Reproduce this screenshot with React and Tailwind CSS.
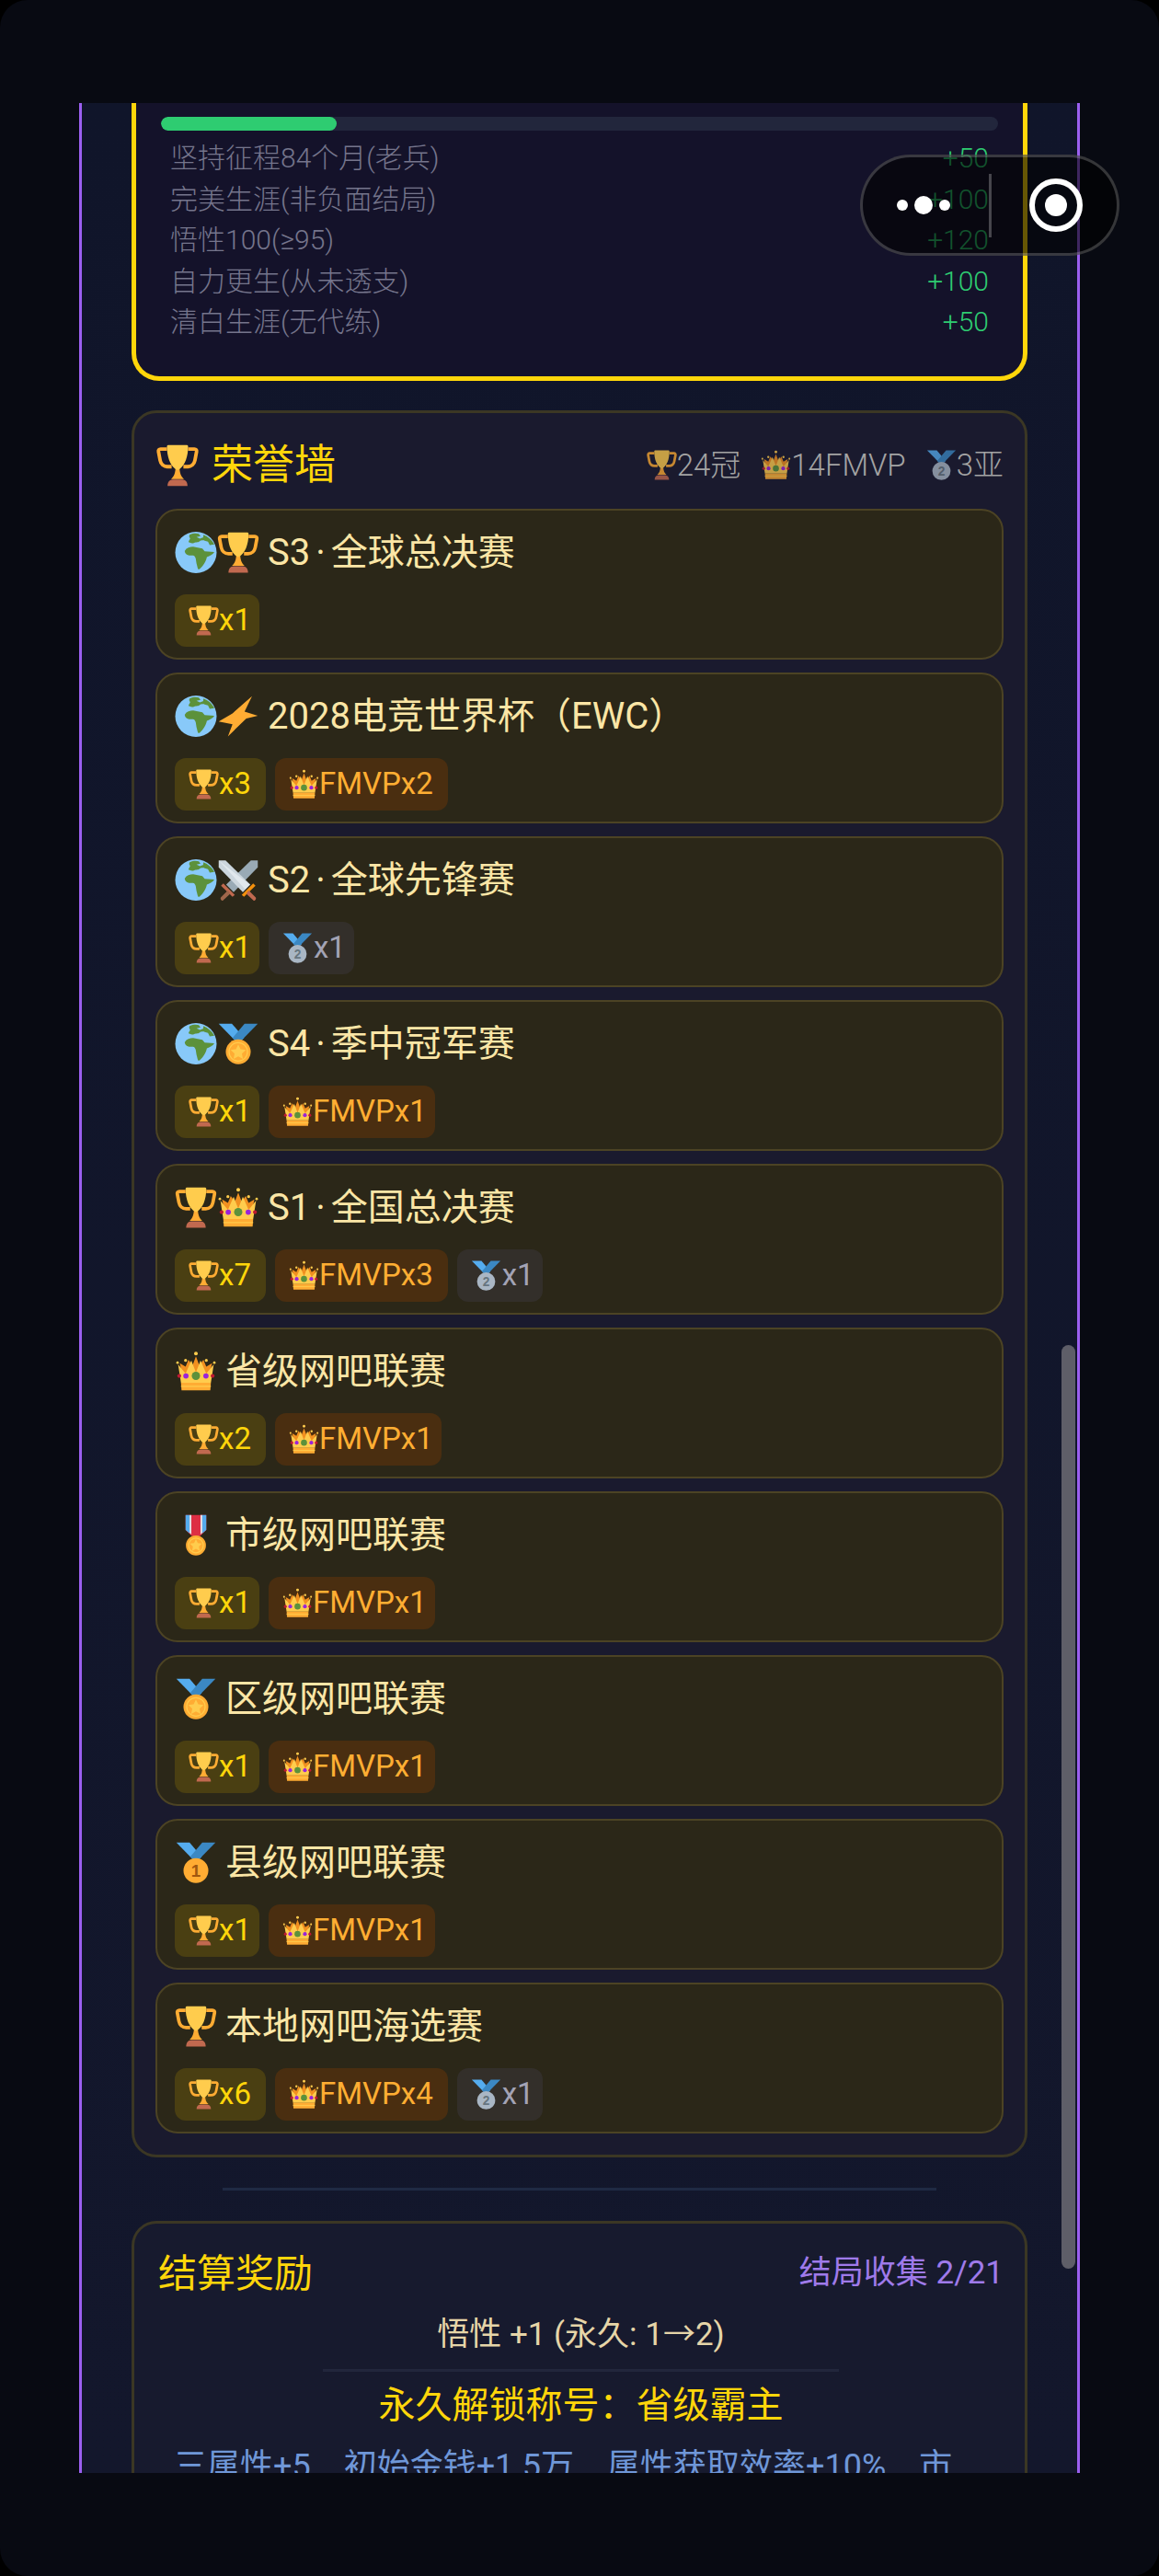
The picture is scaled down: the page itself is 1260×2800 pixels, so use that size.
import React from "react";

// emoji drawn by hand, 36x36 box
const Trophy = ({ className }) => (
  <svg viewBox="0 0 36 36" className={className}>
    <path d="M9 4H3.6C2.2 4 1.6 5 1.8 6.2l1.4 7.4C3.8 16.8 6.2 19 9.5 19H13" fill="none" stroke="#FFAC33" strokeWidth="3" />
    <path d="M27 4h5.4c1.4 0 2 1 1.8 2.2l-1.4 7.4C32.2 16.8 29.8 19 26.5 19H23" fill="none" stroke="#FFAC33" strokeWidth="3" />
    <path d="M16.3 19h3.4c0 5 1 8 3.8 10.500h-11c2.800-2.500 3.800-5.500 3.800-10.500z" fill="#FFAC33" />
    <path d="M9 1.800C9 .8 9.800.5 10.500.5h15c.7 0 1.500.3 1.500 1.300 0 9-3 17.700-9 20.200-6-2.500-9-11.200-9-20.200z" fill="#FFCC4D" />
    <path d="M9.500 35.500c0-3 1.500-5.500 4.500-5.500h8c3 0 4.500 2.500 4.500 5.500z" fill="#C1694F" />
  </svg>
);

const Globe = ({ className }) => (
  <svg viewBox="0 0 36 36" className={className}>
    <circle cx="18" cy="18" r="18" fill="#88C9F9" />
    <path d="M12.500 2.500c3-1.200 6-1.500 8-.7l1.500 2-3.500.7 3 1.500 3.500-1.500 3 1c-1 1.500-4.500 2-6 2-1.500 2-4 1.300-5.500 2-2 1-3.500 0-5-.5.500-2 1.500-2.500 1.500-3.500-1-.7-1-2-.5-3z" fill="#5C913B" />
    <path d="M8.300 16.500c1.500-2.500 4.500-3.500 7.300-3.500l8 1.500 2 2.500 8.400.5c-1 2-4 3.500-6.500 4.500-.5 3-3 8-6.500 10.500-1.500 1-1.500-2-2.500-5-.5-3-.5-5-1.500-6-1-1.500-3-.5-5-1-2.500-.5-3.500-2-3.700-3.500z" fill="#5C913B" />
    <path d="M24.500 2.500c4 1.500 7.500 4.500 9.500 8.500l-4 .5-1.500-3-3.500-1c-1-1.500-.5-3.500-.5-5z" fill="#5C913B" />
  </svg>
);

const Crown = ({ className }) => (
  <svg viewBox="0 0 36 36" className={className}>
    <path d="M4 11l5 3 2.500-6 3.500 5 3-8 3 8 3.500-5 2.500 6 5-3-2 10H6z" fill="#F19020" />
    <path d="M2.500 12L9 20l5-11.500L18 19l4-10.500L27 20l6.500-8-2.500 16H5z" fill="#FFCC4D" />
    <circle cx="9" cy="8.500" r="1.300" fill="#FFCC4D" />
    <circle cx="18" cy="2.500" r="1.600" fill="#FFCC4D" />
    <circle cx="27" cy="8.500" r="1.300" fill="#FFCC4D" />
    <circle cx="2" cy="10.500" r="1.100" fill="#FFCC4D" />
    <circle cx="34" cy="10.500" r="1.100" fill="#FFCC4D" />
    <path d="M5 28h26l-.5 6.500h-25z" fill="#FFAC33" />
    <path d="M5 30.500h26v1H5z" fill="#FFCC4D" />
    <circle cx="18" cy="22" r="3.600" fill="#5C913B" />
    <circle cx="9.300" cy="22" r="2.300" fill="#9A24D8" />
    <circle cx="26.700" cy="22" r="2.300" fill="#9A24D8" />
    <circle cx="3.500" cy="22" r="1.700" fill="#BE1931" />
    <circle cx="32.500" cy="22" r="1.700" fill="#BE1931" />
  </svg>
);

const Ribbon = () => (
  <>
    <path d="M1 .5h11.500L23 13l-5 5z" fill="#55ACEE" />
    <path d="M35 .5H23.500L13 13l5 5z" fill="#3B88C3" />
  </>
);

const SilverMedal = ({ className }) => (
  <svg viewBox="0 0 36 36" className={className}>
    <Ribbon />
    <circle cx="18" cy="25" r="10.800" fill="#A9B6C4" />
    <text x="18" y="30.500" textAnchor="middle" fontSize="15" fontWeight="700" fontFamily="Liberation Sans" fill="#66757F">2</text>
  </svg>
);

const GoldMedal = ({ className }) => (
  <svg viewBox="0 0 36 36" className={className}>
    <Ribbon />
    <circle cx="18" cy="25" r="10.800" fill="#FFAC33" />
    <text x="18" y="30.500" textAnchor="middle" fontSize="15" fontWeight="700" fontFamily="Liberation Sans" fill="#A0570F">1</text>
  </svg>
);

const SportsMedal = ({ className }) => (
  <svg viewBox="0 0 36 36" className={className}>
    <Ribbon />
    <circle cx="18" cy="25" r="10.800" fill="#FFAC33" />
    <circle cx="18" cy="25" r="8" fill="#FFAC33" stroke="#FFCC4D" strokeWidth="1" />
    <path d="M18 18.500l2 4.300 4.600.6-3.400 3.200.9 4.600-4.100-2.300-4.100 2.300.9-4.600-3.400-3.200 4.600-.6z" fill="#FFCC4D" />
  </svg>
);

const MilitaryMedal = ({ className }) => (
  <svg viewBox="0 0 36 36" className={className}>
    <path d="M9 .5h18v13L21.500 19h-7L9 13.500z" fill="#DD2E44" />
    <path d="M9 .5h3.500v16L9 13.500zM27 .5h-3.500v16l3.500-3z" fill="#55ACEE" />
    <path d="M12.500 .5h1.500v17l-1.500-1.500zM23.500 .5H22v17l1.500-1.500z" fill="#E1E8ED" />
    <path d="M15.500 18.500h5V22h-5z" fill="#C1694F" />
    <circle cx="18" cy="27" r="8.700" fill="#FFAC33" />
    <circle cx="18" cy="27" r="6.400" fill="#FFAC33" stroke="#FFCC4D" strokeWidth="1" />
    <path d="M18 21.500l1.600 3.400 3.700.5-2.700 2.600.7 3.700-3.300-1.800-3.300 1.800.7-3.700-2.700-2.600 3.700-.5z" fill="#FFCC4D" />
  </svg>
);

const Bolt = ({ className }) => (
  <svg viewBox="0 0 36 36" className={className}>
    <path d="M30 .5L13 15.500 1 22.500l12 2.500-4 10.500 16-15.500 10-2.500-11.500-3.500z" fill="#FFAC33" />
  </svg>
);

const Swords = ({ className }) => (
  <svg viewBox="0 0 36 36" className={className}>
    <path d="M35 1v6L14 28.500l-6.500-6.500L29 1z" fill="#99AAB5" />
    <path d="M1 1v6l21 21.500 6.500-6.500L7 1z" fill="#CCD6DD" />
    <path d="M1 1l27 21-4 4z" fill="#E1E8ED" />
    <path d="M5 21l10 10-2 1.500L3 23z" fill="#C1694F" />
    <path d="M9 27l-6 6c-1 1 0 3 1.500 3l6.500-6z" fill="#A0674B" />
    <path d="M31 21L21 31l2 1.500L33 23z" fill="#F4900C" />
    <path d="M27 27l6 6c1 1 0 3-1.500 3L25 30z" fill="#C1694F" />
  </svg>
);

const bonusRows = [
  { label: "坚持征程84个月(老兵)", score: "+50" },
  { label: "完美生涯(非负面结局)", score: "+100" },
  { label: "悟性100(≥95)", score: "+120" },
  { label: "自力更生(从未透支)", score: "+100" },
  { label: "清白生涯(无代练)", score: "+50" },
];

const honors = [
  { icons: [Globe, Trophy], season: "S3", title: "全球总决赛", cups: 1 },
  { icons: [Globe, Bolt], title: "2028电竞世界杯（EWC）", cups: 3, fmvp: 2 },
  { icons: [Globe, Swords], season: "S2", title: "全球先锋赛", cups: 1, silver: 1 },
  { icons: [Globe, SportsMedal], season: "S4", title: "季中冠军赛", cups: 1, fmvp: 1 },
  { icons: [Trophy, Crown], season: "S1", title: "全国总决赛", cups: 7, fmvp: 3, silver: 1 },
  { icons: [Crown], title: "省级网吧联赛", cups: 2, fmvp: 1 },
  { icons: [MilitaryMedal], title: "市级网吧联赛", cups: 1, fmvp: 1 },
  { icons: [SportsMedal], title: "区级网吧联赛", cups: 1, fmvp: 1 },
  { icons: [GoldMedal], title: "县级网吧联赛", cups: 1, fmvp: 1 },
  { icons: [Trophy], title: "本地网吧海选赛", cups: 6, fmvp: 4, silver: 1 },
];

const HonorCard = ({ honor }) => (
  <div className="h-[164px] rounded-[24px] border-[2px] border-[#4c4324] bg-[#2b2718] pl-[19px] pt-[21px]">
    <div className="flex h-[50px] items-center">
      <div className="flex">
        {honor.icons.map((Icon, i) => (
          <Icon key={i} className="h-[45px] w-[46px]" />
        ))}
      </div>
      <span className="ml-[9px] text-[40px] leading-[50px] text-[#fbe6a6]">
        {honor.season && (
          <>
            {honor.season}
            <span className="mx-[6px]">·</span>
          </>
        )}
        {honor.title}
      </span>
    </div>
    <div className="mt-[20px] flex gap-[10px]">
      <div className={`flex h-[57px] items-center rounded-[12px] bg-[#4a3f12] pl-[15px] text-[33px] text-[#ffd60a] ${honor.cups === 1 ? "pr-[9px]" : "pr-[16px]"}`}>
        <Trophy className="h-[33px] w-[33px]" />x{honor.cups}
      </div>
      {honor.fmvp && (
        <div className={`flex h-[57px] items-center rounded-[12px] bg-[#4a2e10] pl-[15px] text-[33px] text-[#ffae33] ${honor.fmvp === 1 ? "pr-[9px]" : "pr-[16px]"}`}>
          <Crown className="h-[33px] w-[33px]" />FMVPx{honor.fmvp}
        </div>
      )}
      {honor.silver && (
        <div className="flex h-[57px] items-center rounded-[12px] bg-[#332f2a] pl-[15px] pr-[9px] text-[33px] text-[#a3a3b5]">
          <SilverMedal className="h-[33px] w-[33px]" />
          <span className="ml-[1px]">x{honor.silver}</span>
        </div>
      )}
    </div>
  </div>
);

export default function App() {
  return (
    <div className="relative h-[2800px] w-[1260px] overflow-hidden bg-black font-[Roboto,'Noto_Sans_CJK_SC',sans-serif] font-normal">
      <div className="flex h-full flex-col rounded-[30px] bg-[#080a12] px-[86px] py-[112px]">
        {/* scrolling game panel */}
        <div className="relative h-[2576px] overflow-hidden border-x-[3px] border-[#9b5ff0] bg-gradient-to-b from-[#10152a] to-[#13172c] px-[54px]">
          <div className="rounded-b-[30px] border-x-[5px] border-b-[5px] border-[#ffd60a] bg-[#14122a] px-[27px] pb-[36px] pt-[15px]">
            <div className="h-[15px] overflow-hidden rounded-full bg-[#22263c]">
              <div className="h-full w-[191px] rounded-full bg-[#2ecc71]" />
            </div>
            <div className="mt-[8px] px-[10px]">
              {bonusRows.map((row) => (
                <div key={row.label} className="flex h-[44.5px] items-center justify-between text-[30px] font-light leading-[44px]">
                  <span className="text-[#75758c]">{row.label}</span>
                  <span className="text-[#2ecc71]">{row.score}</span>
                </div>
              ))}
            </div>
          </div>

          {/* 荣誉墙 */}
          <div className="mt-[32px] rounded-[27px] border-[3px] border-[#3b3724] bg-[#1a1a2e] px-[23px] pb-[23px] pt-[24px]">
            <div className="mb-[14px] flex h-[66px] items-center justify-between pl-px">
              <div className="flex items-center">
                <Trophy className="h-[46px] w-[46px]" />
                <span className="ml-[14px] text-[45px] text-[#ffd60a]">荣誉墙</span>
              </div>
              <div className="flex items-center gap-[22px] text-[33px] font-light text-[#a3a3a3]">
                <span className="flex items-center">
                  <Trophy className="h-[33px] w-[33px] opacity-75" />24冠
                </span>
                <span className="flex items-center">
                  <Crown className="h-[33px] w-[33px] opacity-75" />14FMVP
                </span>
                <span className="flex items-center">
                  <SilverMedal className="h-[33px] w-[33px] opacity-75" />3亚
                </span>
              </div>
            </div>
            <div className="flex flex-col gap-[14px]">
              {honors.map((honor) => (
                <HonorCard key={honor.title} honor={honor} />
              ))}
            </div>
          </div>

          <div className="mx-[99px] mt-[33px] h-[3px] bg-[#1f2a44]" />

          {/* 结算奖励 */}
          <div className="mt-[33px] rounded-t-[27px] border-x-[3px] border-t-[3px] border-[#3b3724] bg-[#171a2e] pl-[26px] pr-[23px] pt-[30px]">
            <div className="flex h-[50px] items-center justify-between">
              <span className="text-[42px] text-[#ffd60a]">结算奖励</span>
              <span className="text-[35px] text-[#9f7aea]">结局收集 2/21</span>
            </div>
            <div className="mt-[16px] h-[50px] text-center text-[35px] leading-[50px] text-[#e6d5a8]">悟性 +1 (永久: 1→2)</div>
            <div className="mx-[179px] mt-[12px] h-[3px] bg-[#22263c]" />
            <div className="mt-[12px] h-[50px] text-center text-[40px] leading-[50px] text-[#ffd60a]">永久解锁称号：省级霸主</div>
            <div className="mt-[16px] whitespace-nowrap pl-[17px] text-[36px] leading-[50px] text-[#6f97d8]">三属性+5　初始金钱+1.5万　属性获取效率+10%　市</div>
          </div>

          {/* scrollbar */}
          <div className="absolute right-[2px] top-[1350px] h-[1004px] w-[15px] rounded-full bg-[#5e5e68]" />
        </div>
      </div>

      {/* miniprogram capsule */}
      <div className="absolute left-[935px] top-[168px] flex h-[110px] w-[282px] items-center rounded-full border-[3px] border-white/20 bg-black/60">
        <div className="flex w-[137px] items-center justify-end gap-[7px] pr-[42px]">
          <span className="h-[12px] w-[12px] rounded-full bg-white" />
          <span className="h-[20px] w-[20px] rounded-full bg-white" />
          <span className="h-[12px] w-[12px] rounded-full bg-white" />
        </div>
        <div className="h-[69px] w-[3px] bg-white/25" />
        <div className="ml-[41px] flex h-[58px] w-[58px] items-center justify-center rounded-full border-[6px] border-white">
          <span className="h-[24px] w-[24px] rounded-full bg-white" />
        </div>
      </div>
    </div>
  );
}
